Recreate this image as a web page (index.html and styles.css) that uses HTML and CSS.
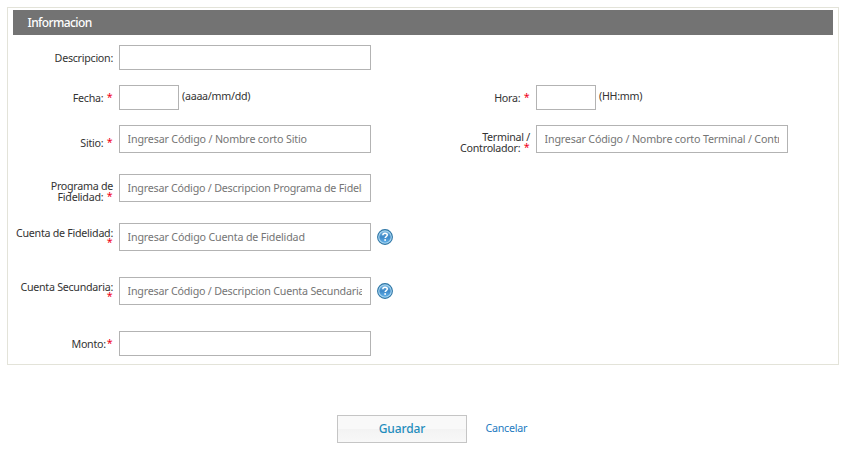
FILE: index.html
```html
<!DOCTYPE html>
<html lang="es">
<head>
<meta charset="utf-8">
<title>Informacion</title>
<link rel="stylesheet" href="styles.css">
</head>
<body>
<svg width="0" height="0" class="defs">
  <defs>
    <linearGradient id="ball" x1="0" y1="0" x2="0" y2="1"><stop offset="0" stop-color="#7db8e0"/><stop offset=".5" stop-color="#3c88c8"/><stop offset="1" stop-color="#62b0e8"/></linearGradient>
    <symbol id="help" viewBox="0 0 16 16">
      <circle cx="8" cy="8" r="7.4" fill="#a9d6f2" stroke="#2f76a5" stroke-width="1.1"/>
      <circle cx="8" cy="8" r="5.7" fill="url(#ball)"/>
      <path d="M5.8 6.3C5.9 4.9 6.8 4.3 8 4.3c1.400 0 2.300.7 2.300 1.800 0 1.500-2.100 1.500-2.100 3" fill="none" stroke="#fff" stroke-width="1.5"/>
      <rect x="7.300" y="10.200" width="1.700" height="1.600" fill="#fff"/>
    </symbol>
  </defs>
</svg>
<form class="page">
  <section class="panel">
    <h1 class="title"><span>Informacion</span></h1>
    <div class="row">
      <label class="label">Descripcion:</label><input class="field">
    </div>
    <div class="row gap-15">
      <div class="cell"><label class="label">Fecha: <b>*</b></label><input class="field short"><span class="hint">(aaaa/mm/dd)</span></div>
      <div class="cell"><label class="label">Hora: <b>*</b></label><input class="field short"><span class="hint">(HH:mm)</span></div>
    </div>
    <div class="row gap-15">
      <div class="cell"><label class="label sitio">Sitio: <b>*</b></label><input class="field tall" placeholder="Ingresar Código / Nombre corto Sitio"></div>
      <div class="cell"><label class="label double">Terminal /<br>Controlador: <b>*</b></label><input class="field tall" placeholder="Ingresar Código / Nombre corto Terminal / Controlador"></div>
    </div>
    <div class="row gap-21">
      <label class="label double">Programa de<br>Fidelidad: <b>*</b></label><input class="field tall dense" placeholder="Ingresar Código / Descripcion Programa de Fidelidad">
    </div>
    <div class="row gap-21">
      <label class="label cuenta">Cuenta de Fidelidad:<br><b>*</b></label><input class="field tall" placeholder="Ingresar Código Cuenta de Fidelidad"><svg class="help"><use href="#help"/></svg>
    </div>
    <div class="row gap-26">
      <label class="label cuenta">Cuenta Secundaria:<br><b>*</b></label><input class="field tall dense" placeholder="Ingresar Código / Descripcion Cuenta Secundaria"><svg class="help"><use href="#help"/></svg>
    </div>
    <div class="row gap-26">
      <label class="label">Monto:<b>*</b></label><input class="field">
    </div>
  </section>
  <div class="actions">
    <button class="save" type="button">Guardar</button>
    <a class="cancel">Cancelar</a>
  </div>
</form>
</body>
</html>
```
FILE: styles.css
```css
* { box-sizing: border-box; }
body { margin: 0; background: #fff; color: #333; font: 10.7px/11px "Noto Sans", sans-serif; letter-spacing: -.27px; }
.defs { display: block; }
.page { padding: 7px 10px 0 7px; }
.panel { height: 358px; border: 1px solid #e3e3d9; padding-top: 2px; }
.title { height: 25px; margin: 0 5px 10px; padding-left: 14.5px; background: #737373; color: #fff; font-size: 12px; font-weight: 500; line-height: 25px; letter-spacing: -.6px; }
.row { display: flex; align-items: flex-start; }
.gap-15 { margin-top: 15px; }
.gap-21 { margin-top: 21px; }
.gap-26 { margin-top: 26px; }
.cell { display: flex; width: 417px; flex: none; align-items: flex-start; }
.label { width: 105px; height: 25px; flex: none; margin-right: 6px; padding-top: 8px; text-align: right; white-space: nowrap; }
.label b { color: #f00018; font-weight: 400; letter-spacing: .3px; margin-left: 1px; vertical-align: 1px; line-height: 8px; }
.sitio { padding-top: 13px; }
.double { padding-top: 7px; }
.cuenta { padding-top: 5px; line-height: 10px; }
.field { width: 252px; height: 25px; flex: none; margin: 0; padding: 0 8px; border: 1px solid #b3b3b3; border-radius: 0; background: #fff; color: #333; font: inherit; letter-spacing: -.17px; outline: 0; }
.dense { letter-spacing: -.21px; }
.field::placeholder { color: #757575; opacity: 1; }
.tall { height: 28px; padding: 0 8px 1px 7.5px; }
.short { width: 60px; }
.hint { padding: 6px 0 0 3px; }
.help { width: 16px; height: 16px; margin: 6px 0 0 6px; }
.actions { display: flex; align-items: flex-start; margin: 50px 0 0 330px; }
.save { width: 130px; height: 28px; padding: 0 0 1px; border: 1px solid #c5c5c5; background: linear-gradient(#f9f9f9 50%, #f3f3f3 50%, #f8f8f8); color: #1f8dbd; font: 500 12px/25px "Noto Sans", sans-serif; letter-spacing: -.1px; }
.cancel { margin: 8px 0 0 18.5px; color: #1c7abf; }
```
